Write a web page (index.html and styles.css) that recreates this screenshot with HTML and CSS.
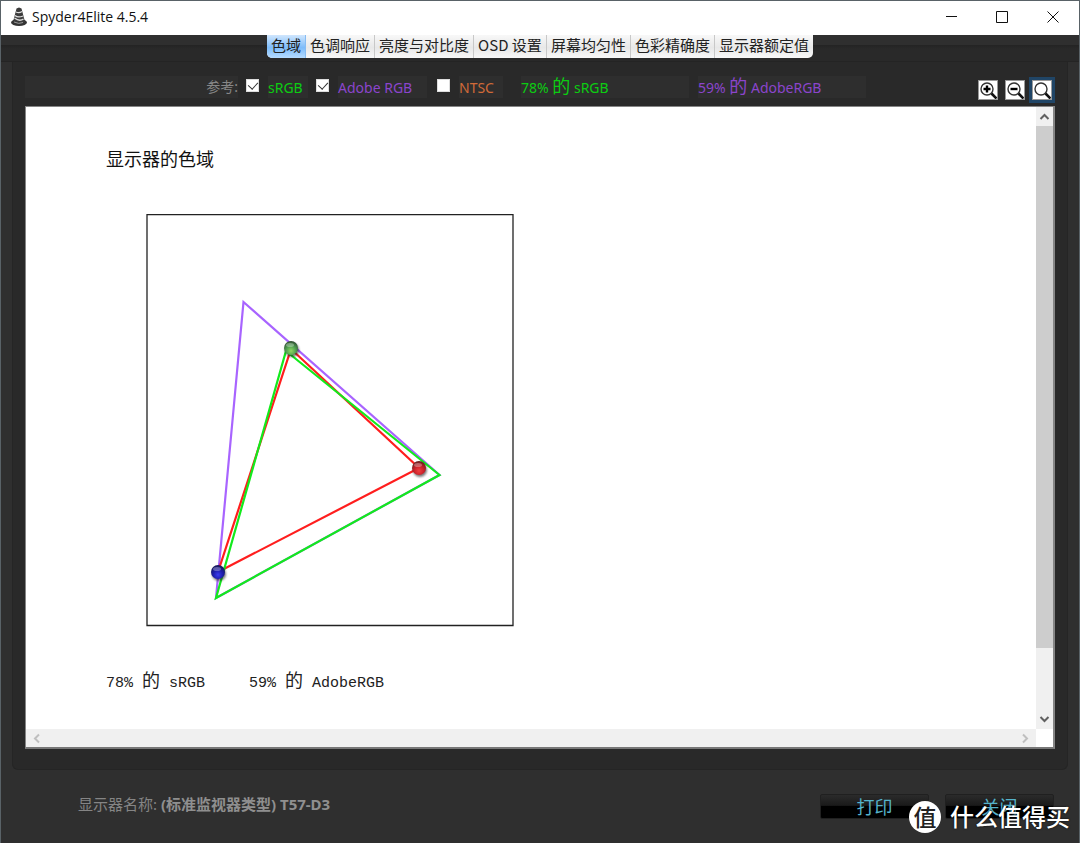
FILE: index.html
```html
<!DOCTYPE html>
<html lang="zh-CN">
<head>
<meta charset="utf-8">
<title>Spyder4Elite 4.5.4</title>
<link rel="stylesheet" href="styles.css">
</head>
<body>
<div class="window">
  <header class="titlebar">
    <svg class="app-icon" width="18" height="20" viewBox="0 0 18 20" aria-hidden="true">
      <ellipse cx="9" cy="15.5" rx="8" ry="3.5" fill="#333"/>
      <path d="M6.500 1.500 9 .5l2.500 1L15 15q-6 4-12 0z" fill="#3b3b3b"/>
      <path d="M6 5q3 1.500 6-.5M5 8.500q3 2.500 8 .5M4.500 11q5 4 9 1" fill="none" stroke="#ddd" stroke-width="1.300"/>
      <path d="M4 15q5 2.500 9 .5" fill="none" stroke="#999"/>
    </svg>
    <h1 class="app-title">Spyder4Elite 4.5.4</h1>
    <div class="window-controls">
      <button class="win-btn" aria-label="最小化"><svg width="12" height="12"><path d="M1 5.500h11" stroke="#111"/></svg></button>
      <button class="win-btn" aria-label="最大化"><svg width="12" height="12"><path d="M.5.500h11v11H.5z" fill="none" stroke="#111"/></svg></button>
      <button class="win-btn" aria-label="关闭窗口"><svg width="12" height="12"><path d="M.5.500l11 11M11.500.500l-11 11" stroke="#111"/></svg></button>
    </div>
  </header>

  <nav class="tabbar">
    <div class="tabs">
      <button class="tab tab-active">色域</button>
      <button class="tab">色调响应</button>
      <button class="tab">亮度与对比度</button>
      <button class="tab">OSD 设置</button>
      <button class="tab">屏幕均匀性</button>
      <button class="tab">色彩精确度</button>
      <button class="tab">显示器额定值</button>
    </div>
  </nav>

  <main class="panel">
    <div class="toolbar">
      <span class="cell ref-label">参考:</span>
      <input class="check" type="checkbox" id="srgb" checked>
      <label class="cell green ref-srgb" for="srgb">sRGB</label>
      <input class="check" type="checkbox" id="adobe" checked>
      <label class="cell purple ref-adobe" for="adobe">Adobe RGB</label>
      <input class="check check-ntsc" type="checkbox" id="ntsc">
      <label class="cell orange ref-ntsc" for="ntsc">NTSC</label>
      <span class="cell green result result-first">78% <span class="de">的</span> sRGB</span>
      <span class="cell purple result">59% <span class="de">的</span> AdobeRGB</span>
      <div class="zoom-group">
        <button class="zoom-btn" aria-label="放大"><svg width="18" height="18"><circle cx="8" cy="8" r="6" class="lens"/><path d="M12.500 12.500l5 5" class="handle"/><path d="M4.500 8h7M8 4.500v7" class="sign"/></svg></button>
        <button class="zoom-btn" aria-label="缩小"><svg width="18" height="18"><circle cx="8" cy="8" r="6" class="lens"/><path d="M12.500 12.500l5 5" class="handle"/><path d="M4.500 8h7" class="sign"/></svg></button>
        <button class="zoom-btn zoom-active" aria-label="适合窗口"><svg width="18" height="18"><circle cx="8" cy="8" r="6" class="lens"/><path d="M12.500 12.500l5 5" class="handle"/></svg></button>
      </div>
    </div>

    <section class="viewer">
      <article class="report">
        <h2 class="report-title">显示器的色域</h2>
        <svg class="gamut" width="368" height="413" viewBox="0 0 368 413" role="img" aria-label="色域图">
          <defs>
            <radialGradient id="ball-green" cx=".5" cy=".7" r=".7"><stop offset="0" stop-color="#8fd860"/><stop offset=".5" stop-color="#4fa050"/><stop offset="1" stop-color="#2e4a30"/></radialGradient>
            <radialGradient id="ball-red" cx=".5" cy=".7" r=".7"><stop offset="0" stop-color="#f04040"/><stop offset=".5" stop-color="#c82028"/><stop offset="1" stop-color="#5a2020"/></radialGradient>
            <radialGradient id="ball-blue" cx=".5" cy=".7" r=".7"><stop offset="0" stop-color="#3a3af0"/><stop offset=".5" stop-color="#1c1ca8"/><stop offset="1" stop-color="#181850"/></radialGradient>
            <filter id="soft" x="-50%" y="-50%" width="200%" height="200%"><feGaussianBlur stdDeviation="1"/></filter>
          </defs>
          <path d="M1 .500h366v411H1z" fill="#fff" stroke="#222" stroke-width="1.300"/>
          <g fill="none" stroke-width="2.200">
            <path d="M97.500 88 293.500 261 70 384z" stroke="#a864ff"/>
            <path d="M145 135 273 254 72 358z" stroke="#ff1e1e"/>
            <path d="M140 137 293.500 261 70 384z" stroke="#12ea1c"/>
          </g>
          <g fill="#222" opacity=".6" filter="url(#soft)"><circle cx="146" cy="136" r="7"/><circle cx="274" cy="256" r="7"/><circle cx="73" cy="360" r="7"/></g>
          <circle cx="145" cy="134" r="7" fill="url(#ball-green)"/>
          <circle cx="273" cy="254" r="7" fill="url(#ball-red)"/>
          <circle cx="72" cy="358" r="7" fill="url(#ball-blue)"/>
          <g fill="#fff" opacity=".3"><ellipse cx="144" cy="131" rx="4" ry="2"/><ellipse cx="272" cy="251" rx="4" ry="2"/><ellipse cx="71" cy="355" rx="4" ry="2"/></g>
        </svg>
        <p class="summary"><span>78% <span class="de">的</span> sRGB</span><span>59% <span class="de">的</span> AdobeRGB</span></p>
      </article>
      <div class="vscroll">
        <svg width="17" height="19"><path d="M4.500 12l4-4 4 4" fill="none" stroke="#606060" stroke-width="2"/></svg>
        <div class="thumb"></div>
        <svg width="17" height="19"><path d="M4.500 7l4 4 4-4" fill="none" stroke="#606060" stroke-width="2"/></svg>
      </div>
      <div class="hscroll">
        <svg width="17" height="17"><path d="M11 4.500l-4 4 4 4" fill="none" stroke="#bfbfbf" stroke-width="2"/></svg>
        <svg width="17" height="17"><path d="M6 4.500l4 4-4 4" fill="none" stroke="#bfbfbf" stroke-width="2"/></svg>
      </div>
      <div class="corner"></div>
    </section>
  </main>

  <footer class="footer">
    <p class="monitor">显示器名称: <b>(标准监视器类型) T57-D3</b></p>
    <div class="actions">
      <button class="action">打印</button>
      <button class="action">关闭</button>
    </div>
  </footer>
  <div class="watermark"><span class="mark-logo">值</span><span class="mark-text">什么值得买</span></div>
</div>
</body>
</html>
```
FILE: styles.css
```css
* { box-sizing: border-box; }
body { margin: 0; font-family: "Noto Sans", "Noto Sans CJK SC", sans-serif; }
h1, h2, p { margin: 0; font-weight: 400; }
button { margin: 0; padding: 0; border: 0; background: none; font: inherit; color: inherit; }
svg { display: block; }

.window { position: relative; display: flex; flex-direction: column; min-height: 100vh; border: 1px solid #596267; background: #2f2f2f; overflow: hidden; }

.titlebar { display: flex; align-items: center; height: 34px; padding: 0 1px 2px 9px; background: #fff; }
.app-title { margin-left: 4px; font-family: "Open Sans", sans-serif; font-size: 14px; line-height: 20px; color: #111; }
.window-controls { display: flex; margin-left: auto; }
.win-btn { display: grid; place-items: center; width: 51px; height: 32px; }

.tabbar { display: flex; justify-content: center; height: 27px; border-bottom: 1px solid #242424; background: linear-gradient(#2f2f2f 10px, #232323 10px, #292929 14px); }
.tabs { display: flex; height: 23px; border-radius: 0 0 5px 5px; overflow: hidden; background: linear-gradient(#f8f8f8, #e8e8e8 55%, #f8f8f8); }
.tab { padding: 0 4px 3px; border-right: 1px solid #c8c8c8; font-family: "Noto Sans CJK SC", sans-serif; font-size: 15px; line-height: 20px; color: #222; white-space: nowrap; }
.tab:last-child { border-right: 0; }
.tab-active { background: linear-gradient(#d0e6fd, #7dbcfa 55%, #b6dbff); border-right-color: #87bcf2; }

.panel { display: flex; flex-direction: column; flex: 1; margin: 0 11px; padding: 14px 12px 20px 12px; border: 1px solid #252525; border-top: 0; border-radius: 0 0 6px 6px; background: #292929; }

.toolbar { display: flex; align-items: center; height: 30px; padding-bottom: 8px; font-size: 14px; line-height: 24px; }
.cell { height: 22px; background: #2e2e2e; white-space: nowrap; }
.ref-label { width: 213px; text-align: right; line-height: 22px; color: #878787; }
.check { appearance: none; position: relative; width: 13px; height: 13px; margin: 0 9px 3px 8px; border: 1px solid #ddd; background: #fff; }
.check:checked::after { content: ""; position: absolute; left: 3px; top: 0; width: 5px; height: 8px; border: solid #333; border-width: 0 1px 1px 0; transform: rotate(42deg); }
.check-ntsc { margin-left: 10px; }
.green { color: #0ccc12; }
.purple { color: #8b45cc; }
.orange { color: #d06a38; }
.ref-srgb { width: 40px; }
.ref-adobe { width: 89px; }
.ref-ntsc { width: 44px; }
.result { width: 168px; margin-left: 9px; line-height: 20px; }
.result-first { margin-left: 18px; }
.toolbar .de { font-size: 18px; }

.zoom-group { display: flex; gap: 7px; margin-left: auto; }
.zoom-btn { border: 1px solid #999; background: #fff; width: 20px; height: 20px; margin-top: 5px; }
.zoom-active { outline: 3px solid #204566; margin-right: 3px; }
.lens { fill: #fff; stroke: #333; stroke-width: 1.4px; }
.handle { fill: none; stroke: #111; stroke-width: 2.6px; }
.sign { fill: none; stroke: #000; stroke-width: 2.4px; }

.viewer { display: grid; grid-template-columns: 1fr 17px; grid-template-rows: 1fr 18px; flex: 1; border: 1px solid #858585; border-right-width: 2px; border-bottom: 2px solid #777; background: #fff; }
.report { padding: 37px 80px 31px; }
.report-title { font-family: "Noto Sans CJK SC", sans-serif; font-weight: 400; font-size: 18px; line-height: 28px; color: #111; }
.gamut { margin: 42px 0 0 40px; }
.summary { display: flex; gap: 44px; margin-top: 43px; font-family: "Liberation Mono", "Noto Sans CJK SC", monospace; font-size: 15px; line-height: 28px; color: #222; white-space: nowrap; }
.summary .de { font-size: 18px; line-height: 20px; }

.vscroll { display: flex; flex-direction: column; background: #f0f0f0; }
.thumb { flex: 1; margin-bottom: 62px; background: #cdcdcd; }
.hscroll { display: flex; justify-content: space-between; align-items: center; padding: 0 2px; background: #f0f0f0; }
.corner { background: #fff; }

.footer { display: flex; justify-content: space-between; align-items: flex-start; height: 73px; padding: 24px 25px 0 77px; }
.monitor { font-size: 15px; line-height: 20px; color: #858585; }
.monitor b { font-weight: 700; color: #8f8f8f; }
.actions { display: flex; gap: 16px; }
.action { width: 109px; height: 25px; border: 1px solid #202020; border-radius: 2px; background: linear-gradient(#2b2b2b, #1a1a1a 45%, #000 50%, #000); font-size: 18px; line-height: 20px; color: #55b3cb; }

.watermark { position: absolute; right: 9px; bottom: 8px; display: flex; align-items: center; gap: 9px; font-family: "Noto Sans CJK SC", sans-serif; font-weight: 500; font-size: 24px; line-height: 34px; color: #fff; text-shadow: 0 0 2px #000; }
.mark-text { padding-bottom: 2px; }
.mark-logo { width: 32px; height: 32px; border-radius: 50%; background: #fff; color: #222; font-size: 23px; line-height: 30px; text-align: center; text-shadow: none; }
```
